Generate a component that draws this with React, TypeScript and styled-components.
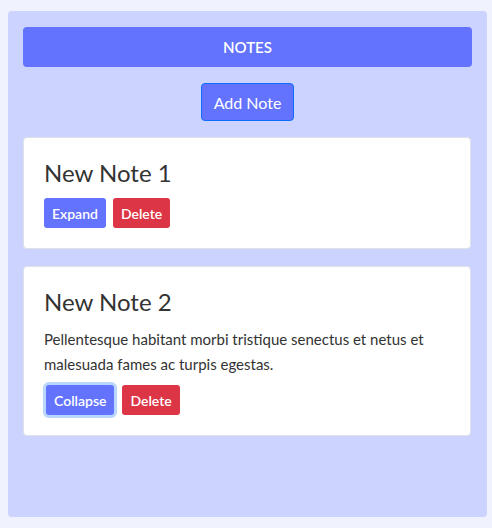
import React, { useState } from "react";
import styled, { createGlobalStyle } from "styled-components";

const Global = createGlobalStyle`
  html, body { margin: 0; padding: 0; background: #f0f3fe; }
  body { font-family: Lato, "Noto Sans", sans-serif; color: #212529; }
  * { box-sizing: border-box; }
`;

const Page = styled.div`
  padding: 11px 5px 11px 8px;
`;

const Panel = styled.div`
  width: 479px;
  height: 506px;
  background: #ccd3fe;
  border-radius: 4px;
  padding: 16px 15px;
  display: flex;
  flex-direction: column;
  gap: 16px;
`;

const Header = styled.div`
  height: 40px;
  background: #6373fe;
  border-radius: 4px;
  color: #fff;
  font-size: 15px;
  font-weight: 600;
  display: flex;
  align-items: center;
  justify-content: center;
`;

const Center = styled.div`
  display: flex;
  justify-content: center;
`;

const AddButton = styled.button`
  font-family: inherit;
  height: 38px;
  width: 93px;
  font-size: 16px;
  color: #fff;
  background: #6373fe;
  border: 1px solid #0d6efd;
  border-radius: 4px;
  cursor: pointer;
`;

const List = styled.div`
  display: flex;
  flex-direction: column;
  gap: 17px;
  margin-right: 1px;
`;

const Card = styled.div`
  background: #fff;
  border: 1px solid #dee2e6;
  border-radius: 4px;
  padding: 20px;
`;

const Title = styled.h3`
  margin: 0 0 11px;
  font-size: 24px;
  font-weight: 400;
  line-height: 29px;
  color: #333;
`;

const Body = styled.p`
  margin: 0 0 8px;
  font-size: 15px;
  line-height: 25px;
  color: #333;
`;

const Actions = styled.div`
  display: flex;
  gap: 7px;
`;

const SmallButton = styled.button<{ $variant: "primary" | "danger"; $focus?: boolean }>`
  font-family: inherit;
  height: 30px;
  padding: 0 8px;
  font-size: 14px;
  font-weight: 600;
  color: #fff;
  border: none;
  border-radius: 3px;
  background: ${(p) => (p.$variant === "primary" ? "#6373fe" : "#dc3545")};
  box-shadow: ${(p) => (p.$focus ? "0 0 0 3px #b9d6fd" : "none")};
  margin: ${(p) => (p.$focus ? "0 1px 0 2px" : "0")};
  cursor: pointer;
`;

type Note = { title: string; body: string };

export default function App() {
  const [notes] = useState<Note[]>([
    { title: "New Note 1", body: "Lorem ipsum dolor sit amet." },
    {
      title: "New Note 2",
      body: "Pellentesque habitant morbi tristique senectus et netus et malesuada fames ac turpis egestas.",
    },
  ]);
  const [open, setOpen] = useState<Record<number, boolean>>({ 1: true });

  return (
    <Page>
      <Global />
      <Panel>
        <Header>NOTES</Header>
        <Center>
          <AddButton>Add Note</AddButton>
        </Center>
        <List>
          {notes.map((n, i) => (
            <Card key={i}>
              <Title>{n.title}</Title>
              {open[i] && <Body>{n.body}</Body>}
              <Actions>
                <SmallButton
                  $variant="primary"
                  $focus={open[i]}
                  onClick={() => setOpen({ ...open, [i]: !open[i] })}
                >
                  {open[i] ? "Collapse" : "Expand"}
                </SmallButton>
                <SmallButton $variant="danger">Delete</SmallButton>
              </Actions>
            </Card>
          ))}
        </List>
      </Panel>
    </Page>
  );
}
